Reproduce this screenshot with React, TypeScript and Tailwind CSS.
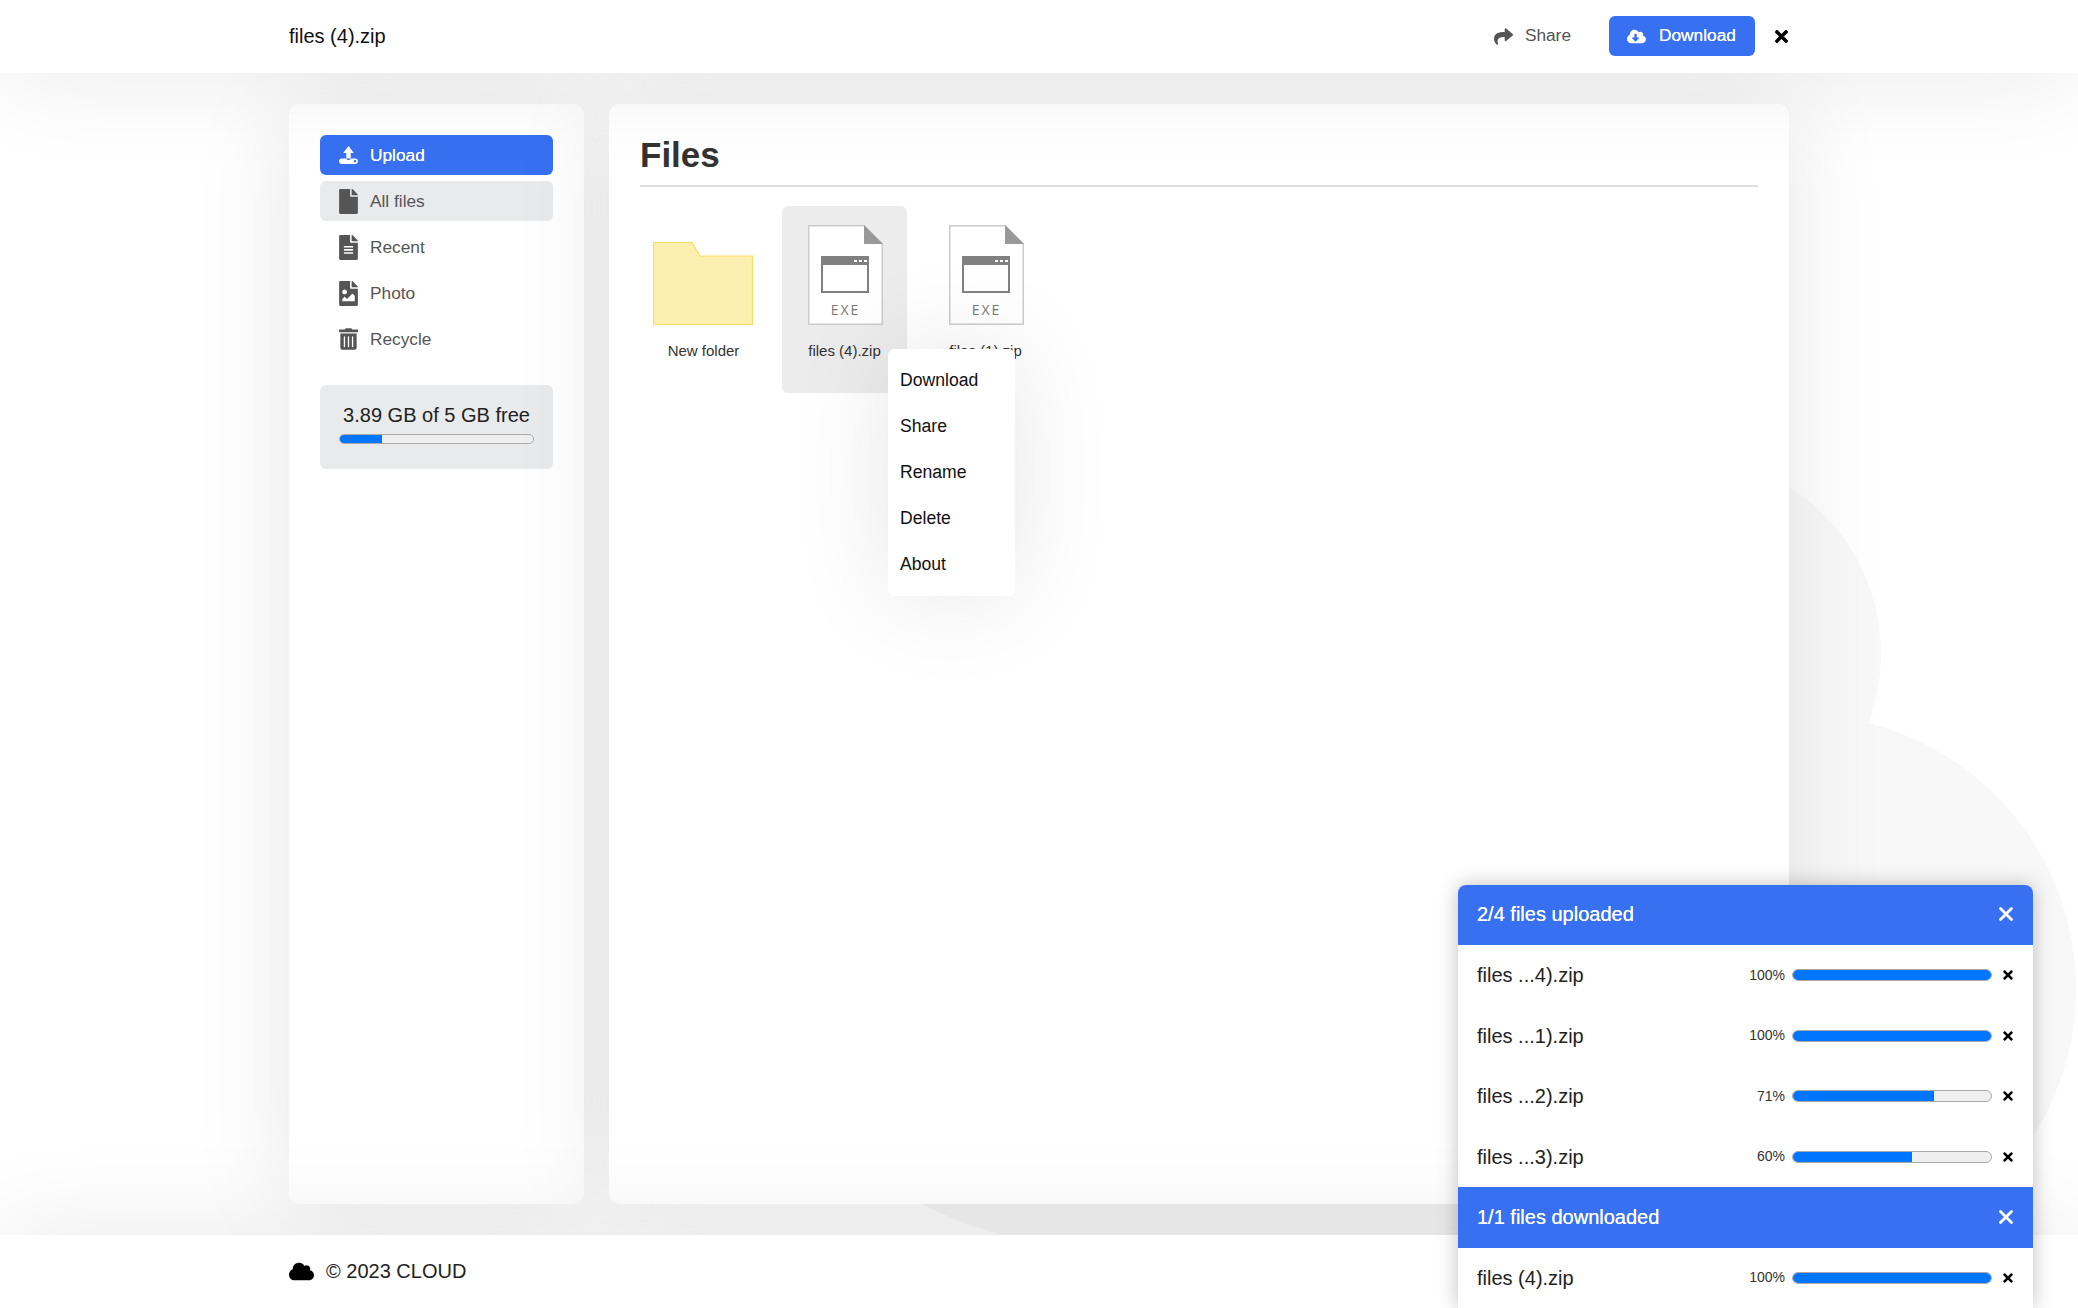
import { FC } from "react";
import {
  FaCloud,
  FaCloudDownloadAlt,
  FaFile,
  FaFileAlt,
  FaFileImage,
  FaShare,
  FaTimes,
  FaTrashAlt,
} from "react-icons/fa";
import { X } from "lucide-react";

const navItems = [
  { name: "All files", icon: <FaFile className="w-[19px] h-[25px]" />, active: true },
  { name: "Recent", icon: <FaFileAlt className="w-[19px] h-[25px]" /> },
  { name: "Photo", icon: <FaFileImage className="w-[19px] h-[25px]" /> },
  { name: "Recycle", icon: <FaTrashAlt className="w-[19px] h-[22px]" /> },
];

const menuItems = ["Download", "Share", "Rename", "Delete", "About"];

const uploads = [
  { name: "files ...4).zip", percent: 100 },
  { name: "files ...1).zip", percent: 100 },
  { name: "files ...2).zip", percent: 71 },
  { name: "files ...3).zip", percent: 60 },
];

const UploadIcon: FC = () => (
  <svg width="19" height="18" viewBox="0 0 19 18" fill="currentColor">
    <path d="M9.5 0L14.8 7H11.7V12.5H7.3V7H4.2Z" />
    <path
      fillRule="evenodd"
      d="M3 12.5H7.3C7.6 13.5 8.4 14 9.5 14C10.6 14 11.4 13.5 11.7 12.5H16C17.7 12.5 19 13.6 19 15.2C19 16.8 17.7 18 16 18H3C1.3 18 0 16.8 0 15.2C0 13.6 1.3 12.5 3 12.5ZM16 14C15.3 14 14.8 14.5 14.8 15.2C14.8 15.9 15.3 16.4 16 16.4C16.7 16.4 17.2 15.9 17.2 15.2C17.2 14.5 16.7 14 16 14Z"
    />
  </svg>
);

const ExeIcon: FC = () => (
  <svg width="75" height="100" viewBox="0 0 75 100">
    <path d="M0.75 0.75H56L74.25 19V99.25H0.75Z" fill="#ffffff" stroke="#cccccc" strokeWidth="1.5" />
    <path d="M56 0L75 19H56Z" fill="#999999" />
    <rect x="14" y="32" width="46" height="35" fill="#ffffff" stroke="#808080" strokeWidth="2" />
    <rect x="13" y="31" width="48" height="9" fill="#808080" />
    <rect x="46" y="35" width="3" height="2" fill="#ffffff" />
    <rect x="51" y="35" width="3" height="2" fill="#ffffff" />
    <rect x="56" y="35" width="3" height="2" fill="#ffffff" />
    <text
      x="37.5"
      y="90"
      textAnchor="middle"
      fontFamily="'Open Sans', sans-serif"
      fontSize="14"
      letterSpacing="2"
      fill="#777777"
    >
      EXE
    </text>
  </svg>
);

const FolderIcon: FC = () => (
  <svg width="100" height="100" viewBox="0 0 100 100">
    <path
      d="M0.5 17.5H39L47 31H99.5V99.5H0.5Z"
      fill="#fdefb0"
      stroke="#f8df60"
      strokeWidth="1.2"
    />
  </svg>
);

const Tile: FC<{ name: string; selected?: boolean; iconClass: string; children: any }> = ({
  name,
  selected,
  iconClass,
  children,
}) => (
  <div
    className={`w-[125px] h-[187px] pt-[19px] rounded-[6px] flex flex-col items-center ${
      selected ? "bg-[#ececec]" : ""
    }`}
  >
    <div className={`h-[100px] flex items-end ${iconClass}`}>{children}</div>
    <p className="mt-[16px] text-[15px] leading-[20px] text-[#333]">{name}</p>
  </div>
);

const Bar: FC<{ percent: number; className: string }> = ({ percent, className }) => (
  <div className={`rounded-full border border-[#aaaaaa] bg-[#efefef] overflow-hidden ${className}`}>
    <div className="h-full bg-[#0075ff] -my-px -ml-px box-content py-px pl-px" style={{ width: `${percent}%` }} />
  </div>
);

const ProgressRow: FC<{ name: string; percent: number }> = ({ name, percent }) => (
  <div className="h-[60.5px] flex items-center pl-[19px] pr-[18px] bg-white">
    <span className="text-[20px] text-[#222] flex-1">{name}</span>
    <span className="text-[14px] text-[#333] mr-[7px]">{percent}%</span>
    <Bar percent={percent} className="w-[200px] h-[12px]" />
    <FaTimes className="w-[14px] h-[14px] ml-[9px] text-black" />
  </div>
);

const PanelHeader: FC<{ title: string; className: string }> = ({ title, className }) => (
  <div className={`flex items-center justify-between pl-[19px] pr-[16px] bg-[#3770f1] text-white ${className}`}>
    <span className="text-[20px] [text-shadow:0_0_0.5px_#ffffff]">{title}</span>
    <X size={22} strokeWidth={3} />
  </div>
);

const App: FC = () => {
  return (
    <div className="relative h-[1308px] overflow-hidden flex flex-col bg-white font-['Liberation_Sans',Arial,sans-serif]">
      {/* cloud behind the panels */}
      <svg className="absolute left-0 top-0 z-0" width="2078" height="1308" viewBox="0 0 2078 1308">
        <g fill="#f8f8f8">
          <circle cx="1104" cy="848" r="400" />
          <circle cx="1685" cy="653" r="196" />
          <circle cx="1802" cy="989" r="274" />
          <rect x="1104" y="700" width="698" height="600" />
        </g>
      </svg>

      <header className="relative z-20 h-[73px] shrink-0 bg-white shadow-[0_0_100px_rgba(0,0,0,0.1)] pl-[289px] pr-[287px] pb-[1px] flex items-center justify-between">
        <span className="text-[20px] text-[#111]">files (4).zip</span>
        <div className="flex items-center">
          <button className="flex items-center text-[17.3px] text-[#555]">
            <FaShare className="w-[19px] h-[19px] mr-[12px]" />
            Share
          </button>
          <button className="ml-[38px] h-[40px] w-[146px] rounded-[6px] bg-[#3770f1] text-white text-[17.3px] flex items-center pl-[18px] [text-shadow:0_0_0.5px_#ffffff]">
            <FaCloudDownloadAlt className="w-[19px] h-[19px] mr-[13px]" />
            Download
          </button>
          <FaTimes className="w-[19px] h-[19px] ml-[17px] text-black" />
        </div>
      </header>

      <main className="relative z-10 flex-1 py-[31px] px-[289px] flex gap-[25px]">
        <aside className="w-[295px] bg-white rounded-[10px] shadow-[0_0_100px_rgba(0,0,0,0.1)] p-[31px]">
          <div className="flex flex-col gap-[6px]">
            <button className="h-[40px] rounded-[6px] bg-[#3770f1] text-white text-[17.3px] flex items-center gap-[12px] pl-[19px] [text-shadow:0_0_0.5px_#ffffff]">
              <UploadIcon />
              <span className="pt-[1px]">Upload</span>
            </button>
            {navItems.map((item) => (
              <div
                key={item.name}
                className={`h-[40px] rounded-[6px] text-[17.3px] text-[#555] flex items-center gap-[12px] pl-[19px] ${
                  item.active ? "bg-[#e9eaec]" : ""
                }`}
              >
                {item.icon}
                <span className="pt-[2px]">{item.name}</span>
              </div>
            ))}
          </div>
          <div className="mt-[26px] h-[84px] rounded-[6px] bg-[#e9eaec] px-[19px] pt-[18px]">
            <p className="text-[20px] leading-[24px] text-[#222] text-center whitespace-nowrap">3.89 GB of 5 GB free</p>
            <Bar percent={22} className="mt-[7px] w-[195px] h-[10px]" />
          </div>
        </aside>

        <section className="relative w-[1181px] bg-white rounded-[10px] shadow-[0_0_100px_rgba(0,0,0,0.1)] px-[31px] pt-[27px]">
          <h1 className="h-[56px] leading-[48px] text-[35px] font-bold text-[#333] border-b-2 border-[#dedede]">Files</h1>
          <div className="mt-[19px] ml-[1px] flex gap-[16px]">
            <Tile name="New folder" iconClass="-ml-[1px]">
              <FolderIcon />
            </Tile>
            <Tile name="files (4).zip" selected iconClass="ml-[1px]">
              <ExeIcon />
            </Tile>
            <Tile name="files (1).zip" iconClass="ml-[1px]">
              <ExeIcon />
            </Tile>
          </div>

          {/* context menu */}
          <div className="absolute left-[279px] top-[245px] w-[127px] h-[247px] rounded-[6px] bg-white shadow-[0_0_100px_rgba(0,0,0,0.1)] py-[8px] pl-[12px]">
            {menuItems.map((item) => (
              <div key={item} className="h-[46px] pt-[1px] flex items-center text-[17.6px] text-[#111]">
                {item}
              </div>
            ))}
          </div>
        </section>
      </main>

      <footer className="relative z-20 h-[73px] shrink-0 bg-white shadow-[0_0_100px_rgba(0,0,0,0.1)] px-[289px] pb-[1px] flex items-center gap-[12px]">
        <FaCloud className="w-[25px] h-[25px] text-black" />
        <span className="text-[20px] text-[#222]">© 2023 CLOUD</span>
      </footer>

      {/* upload and download progress */}
      <div className="absolute z-30 top-[885px] right-[45px] w-[575px] rounded-t-[8px] overflow-hidden shadow-[0_0_20px_rgba(0,0,0,0.25)]">
        <PanelHeader title="2/4 files uploaded" className="h-[60px] pb-[2px]" />
        {uploads.map((file) => (
          <ProgressRow key={file.name} name={file.name} percent={file.percent} />
        ))}
        <PanelHeader title="1/1 files downloaded" className="h-[60.5px]" />
        <ProgressRow name="files (4).zip" percent={100} />
      </div>
    </div>
  );
};

export default App;
